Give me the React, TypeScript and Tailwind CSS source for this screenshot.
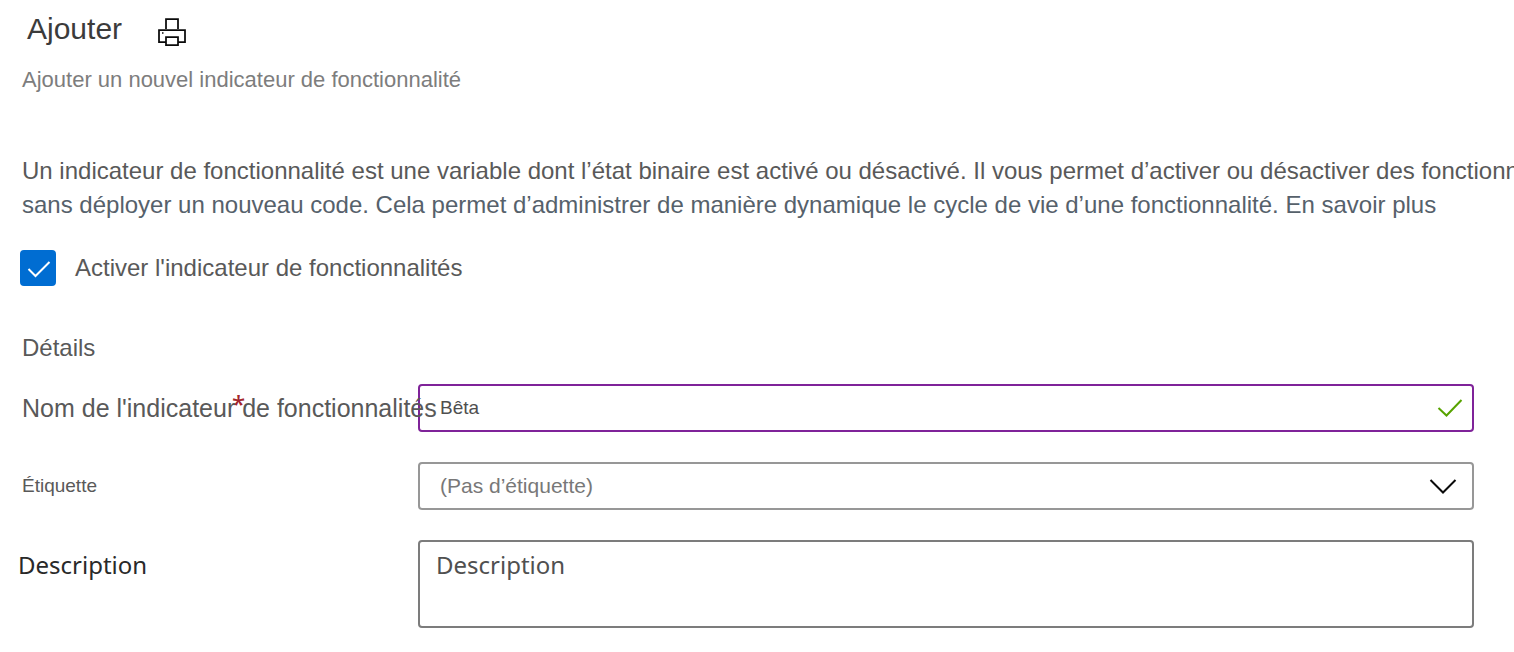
import { useState } from "react";

function PrinterIcon() {
  return (
    <svg width="28" height="28" viewBox="0 0 28 28" fill="none" stroke="#0a0a0a" strokeWidth="1.75" aria-hidden="true">
      <path d="M8 11V1h12v10" />
      <path d="M8 24H1V12h26v12h-7" />
      <path d="M8 19h12v8H8z" />
      <path d="M4 15h1.500" strokeWidth="1.500" />
    </svg>
  );
}

export default function App() {
  const [enabled, setEnabled] = useState(true);
  const [name, setName] = useState("Bêta");
  const [description, setDescription] = useState("");

  return (
    <main className="overflow-hidden bg-white pb-6 font-['Liberation_Sans',Arial,sans-serif] text-[#595959]">
      <header className="px-[22px] pt-[11px]">
        <div className="flex items-center gap-9 pl-[5px]">
          <h1 className="text-[30px] leading-9 text-[#3b3b3b]">Ajouter</h1>
          <button type="button" aria-label="Imprimer" className="pt-1.5">
            <PrinterIcon />
          </button>
        </div>
        <p className="mt-[17px] text-[22px] leading-8 text-[#7d7d7d]">Ajouter un nouvel indicateur de fonctionnalité</p>
      </header>

      <p className="mt-[58px] pl-[22px] text-[24px] leading-[34px] whitespace-nowrap">
        <span className="block">
          Un indicateur de fonctionnalité est une variable dont l’état binaire est activé ou désactivé. Il vous permet
          d’activer ou désactiver des fonctionnalités
        </span>
        <span className="block text-[#56616b]">
          sans déployer un nouveau code. Cela permet d’administrer de manière dynamique le cycle de vie d’une
          fonctionnalité. <a href="#en-savoir-plus">En savoir plus</a>
        </span>
      </p>

      <form onSubmit={(event) => event.preventDefault()}>
        <label className="mt-7 ml-5 flex w-fit items-center gap-[19px] text-[24px] leading-9">
          <span className="grid size-9 place-items-center">
            <input
              type="checkbox"
              checked={enabled}
              onChange={(event) => setEnabled(event.target.checked)}
              className="peer col-start-1 row-start-1 size-9 appearance-none rounded-[4px] border-2 border-[#006dd2] checked:bg-[#006dd2]"
            />
            <svg
              width="36"
              height="36"
              viewBox="0 0 36 36"
              fill="none"
              stroke="#ffffff"
              strokeWidth="2"
              className="pointer-events-none invisible col-start-1 row-start-1 peer-checked:visible"
              aria-hidden="true"
            >
              <path d="M8.500 19l7 7L29.500 12" />
            </svg>
          </span>
          Activer l'indicateur de fonctionnalités
        </label>

        <h2 className="mt-11 pl-[22px] text-[24px] leading-9">Détails</h2>

        <div className="mt-[18px] mr-10 ml-[22px] grid grid-cols-[396px_1fr] gap-y-[30px]">
          <label htmlFor="flag-name" className="relative z-10 self-center text-[25px] leading-8 whitespace-nowrap">
            Nom de l'indicateur de fonctionnalités
            <span className="absolute -top-1 left-[210px] font-['Noto_Sans',sans-serif] text-[24px] leading-8 font-medium text-[#a4262c]">
              *
            </span>
          </label>
          <div className="grid items-center">
            <input
              id="flag-name"
              type="text"
              required
              value={name}
              onChange={(event) => setName(event.target.value)}
              className="col-start-1 row-start-1 h-12 w-full rounded-[4px] border-2 border-[#7f2399] bg-white pr-12 pl-5 text-[19px] text-[#4f4f4f] outline-none"
            />
            <svg
              width="26"
              height="20"
              viewBox="0 0 26 20"
              fill="none"
              stroke="#57a300"
              strokeWidth="2"
              className="col-start-1 row-start-1 mr-[11px] justify-self-end"
              aria-hidden="true"
            >
              <path d="M1.500 10l8 7.500L24.500 2" />
            </svg>
          </div>

          <label htmlFor="flag-label" className="self-center text-[19px] leading-8">
            Étiquette
          </label>
          <div className="grid items-center">
            <select
              id="flag-label"
              className="col-start-1 row-start-1 h-12 w-full appearance-none rounded-[4px] border-2 border-[#979797] bg-white pr-12 pl-5 text-[21px] text-[#787878] outline-none"
            >
              <option>(Pas d’étiquette)</option>
            </select>
            <svg
              width="28"
              height="16"
              viewBox="0 0 28 16"
              fill="none"
              stroke="#0a0a0a"
              strokeWidth="2"
              className="pointer-events-none col-start-1 row-start-1 mr-[17px] justify-self-end"
              aria-hidden="true"
            >
              <path d="M1.500 2L14 14.500 26.500 2" />
            </svg>
          </div>

          <label
            htmlFor="flag-description"
            className="-ml-1 pt-[9px] font-['Noto_Sans',sans-serif] text-[24px] leading-8 text-[#292929]"
          >
            Description
          </label>
          <textarea
            id="flag-description"
            placeholder="Description"
            value={description}
            onChange={(event) => setDescription(event.target.value)}
            className="block h-[88px] w-full resize-none rounded-[4px] border-2 border-[#7c7c7c] bg-white px-4 py-[7px] font-['Noto_Sans',sans-serif] text-[24px] leading-8 text-[#505050] outline-none placeholder:text-[#505050]"
          />
        </div>
      </form>
    </main>
  );
}
